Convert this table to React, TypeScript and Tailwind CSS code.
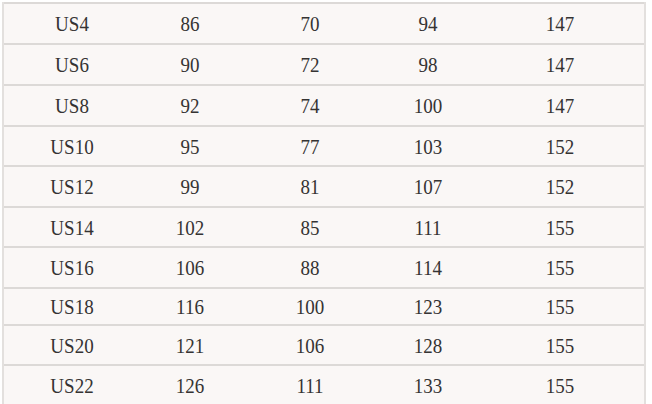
const rows = [
  { size: "US4", h: "h-[41px]", v: ["86", "70", "94", "147"] },
  { size: "US6", h: "h-[41px]", v: ["90", "72", "98", "147"] },
  { size: "US8", h: "h-[41px]", v: ["92", "74", "100", "147"] },
  { size: "US10", h: "h-[40px]", v: ["95", "77", "103", "152"] },
  { size: "US12", h: "h-[41px]", v: ["99", "81", "107", "152"] },
  { size: "US14", h: "h-[40px]", v: ["102", "85", "111", "155"] },
  { size: "US16", h: "h-[41px]", v: ["106", "88", "114", "155"] },
  { size: "US18", h: "h-[37px]", v: ["116", "100", "123", "155"] },
  { size: "US20", h: "h-[40px]", v: ["121", "106", "128", "155"] },
  { size: "US22", h: "h-[40px]", v: ["126", "111", "133", "155"] },
];

function Cell({ text }: { text: string }) {
  return (
    <div className="flex items-center justify-center">
      <span className="inline-block scale-y-[1.15] pt-[2px]">{text}</span>
    </div>
  );
}

export default function App() {
  return (
    <div className="h-[404px] w-[652px] overflow-hidden bg-white pl-[2px] pt-[2px]">
      <div
        className="w-[644px] border-x-2 border-[#e3e0de] bg-[#faf7f6] text-[19px] text-[#353333]"
        style={{ fontFamily: '"Liberation Serif", "Times New Roman", serif' }}
      >
        {rows.map((r) => (
          <div
            key={r.size}
            className={`grid ${r.h} grid-cols-[136px_100px_140px_96px_168px] border-t-2 border-[#dcd9d7]`}
          >
            <Cell text={r.size} />
            {r.v.map((x, i) => (
              <Cell key={i} text={x} />
            ))}
          </div>
        ))}
      </div>
    </div>
  );
}
